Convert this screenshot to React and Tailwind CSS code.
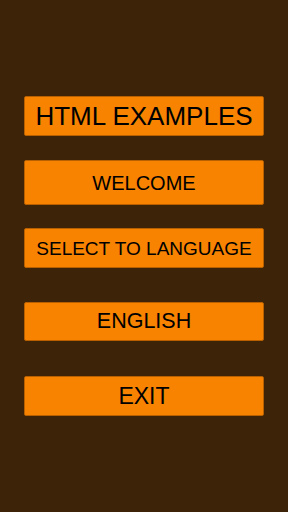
import React from 'react';

const items = [
  { label: 'HTML EXAMPLES', box: 'h-[40px]', text: 'text-[26px]', gap: '' },
  { label: 'WELCOME', box: 'h-[45px]', text: 'text-[20px]', gap: 'mt-[24px]' },
  { label: 'SELECT TO LANGUAGE', box: 'h-[40px]', text: 'text-[19px]', gap: 'mt-[23px]' },
  { label: 'ENGLISH', box: 'h-[39px]', text: 'text-[21.5px]', gap: 'mt-[34px]' },
  { label: 'EXIT', box: 'h-[40px]', text: 'text-[23px]', gap: 'mt-[35px]' },
];

export default function App() {
  return (
    <div className="w-[288px] h-[512px] bg-[#3d2409] flex flex-col items-center pt-[96px] font-['Liberation_Sans',Arial,sans-serif]">
      {items.map((it) => (
        <button
          key={it.label}
          className={`w-[240px] ${it.box} ${it.gap} bg-[#f78300] border border-[#b86000] rounded-[2px] flex items-center justify-center text-black leading-none whitespace-nowrap ${it.text}`}
        >
          {it.label}
        </button>
      ))}
    </div>
  );
}
